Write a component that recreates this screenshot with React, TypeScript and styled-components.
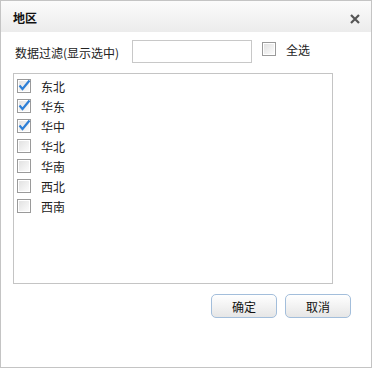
import React from "react";
import styled, { createGlobalStyle } from "styled-components";

const Global = createGlobalStyle`
  html, body { margin: 0; padding: 0; background: #fff; }
  * { box-sizing: border-box; }
  body { font-family: "Microsoft YaHei", "Noto Sans CJK SC", "Noto Sans", sans-serif; font-size: 12px; color: #222; }
`;

const Dialog = styled.div`
  width: 372px;
  height: 368px;
  border: 1px solid #c4c4c4;
  display: flex;
  flex-direction: column;
  background: #fff;
`;

const TitleBar = styled.div`
  height: 31px;
  flex: none;
  display: flex;
  align-items: center;
  justify-content: space-between;
  padding: 0 10px 0 12px;
  background: linear-gradient(#fbfbfb, #ececec);
`;

const Title = styled.span`
  font-weight: bold;
  font-size: 12px;
  color: #111;
  margin-top: 2px;
`;

const Close = styled.span`
  width: 12px;
  height: 12px;
  display: flex;
  margin-top: 4px;
`;

const FilterRow = styled.div`
  display: flex;
  align-items: center;
  height: 23px;
  margin-top: 8px;
  padding-left: 14px;
`;

const Label = styled.span`
  width: 117px;
  color: #222;
  margin-top: 2px;
`;

const Input = styled.input`
  width: 120px;
  height: 23px;
  border: 1px solid #c8c8c8;
  outline: none;
  padding: 0 4px;
  font: inherit;
`;

const SelectAll = styled.label`
  display: flex;
  align-items: center;
  margin-left: 10px;
  margin-top: -5px;
  gap: 10px;
`;

const List = styled.div`
  margin: 10px 0 0 12px;
  width: 320px;
  height: 211px;
  border: 1px solid #c4c4c4;
  padding: 2px 0 0 3px;
  display: flex;
  flex-direction: column;
`;

const Item = styled.div`
  height: 20px;
  display: flex;
  align-items: center;
  gap: 10px;
`;

const Footer = styled.div`
  display: flex;
  justify-content: flex-end;
  gap: 8px;
  margin-top: 10px;
  padding-right: 20px;
`;

const Button = styled.button`
  width: 66px;
  height: 24px;
  border: 1px solid #a3bedb;
  border-radius: 5px;
  background: linear-gradient(#ffffff, #e6e6e6);
  font: inherit;
  color: #111;
  padding: 0;
  cursor: pointer;
`;

const BoxSvg = styled.svg`
  flex: none;
  display: block;
`;

const Check = ({ checked }: { checked?: boolean }) => (
  <BoxSvg width="14" height="14" viewBox="0 0 14 14">
    <defs>
      <linearGradient id="cbg" x1="0" y1="0" x2="1" y2="1">
        <stop offset="0" stopColor="#e2e2e2" />
        <stop offset="1" stopColor="#fbfbfb" />
      </linearGradient>
    </defs>
    <rect x="0.5" y="0.5" width="13" height="13" fill="#fff" stroke="#9a9a9a" />
    <rect x="2" y="2" width="10" height="10" fill="url(#cbg)" />
    {checked && (
      <path d="M2.5 6.5 L5.5 10 L12.5 1.5" fill="none" stroke="#2e7fd6" strokeWidth="2.2" strokeLinejoin="miter" />
    )}
  </BoxSvg>
);

const items: [string, boolean][] = [
  ["东北", true],
  ["华东", true],
  ["华中", true],
  ["华北", false],
  ["华南", false],
  ["西北", false],
  ["西南", false],
];

export default function App() {
  return (
    <>
      <Global />
      <Dialog>
        <TitleBar>
          <Title>地区</Title>
          <Close>
            <svg width="12" height="12" viewBox="0 0 12 12">
              <path d="M2 2 L10 10 M10 2 L2 10" stroke="#555" strokeWidth="2.2" />
            </svg>
          </Close>
        </TitleBar>
        <FilterRow>
          <Label>数据过滤(显示选中)</Label>
          <Input />
          <SelectAll>
            <Check />
            <span>全选</span>
          </SelectAll>
        </FilterRow>
        <List>
          {items.map(([name, c]) => (
            <Item key={name}>
              <Check checked={c} />
              <span>{name}</span>
            </Item>
          ))}
        </List>
        <Footer>
          <Button>确定</Button>
          <Button>取消</Button>
        </Footer>
      </Dialog>
    </>
  );
}
